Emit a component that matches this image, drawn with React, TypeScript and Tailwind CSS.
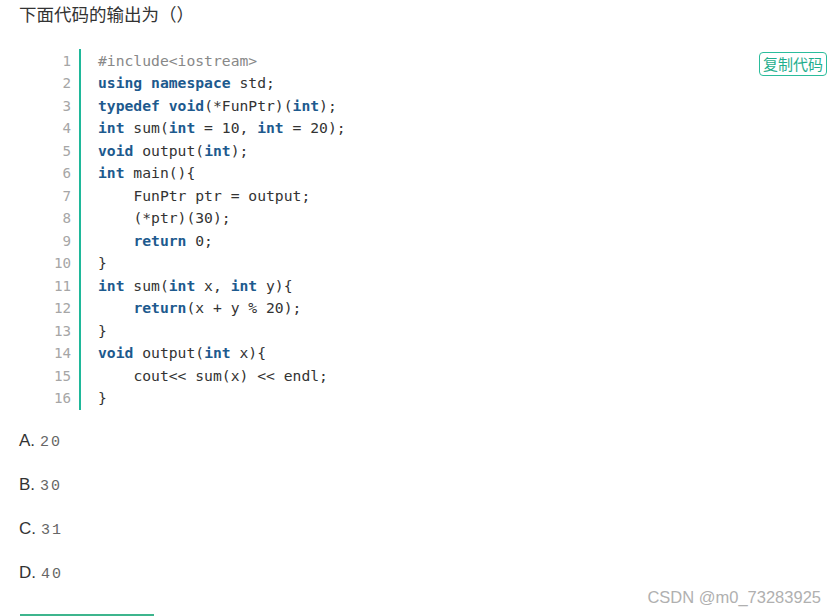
import React from "react";

const kw = "font-bold text-[#1d5a8e]";

const K = ({ children }: { children: React.ReactNode }) => (
  <span className={kw}>{children}</span>
);

const codeLines: React.ReactNode[] = [
  <span className="text-[#888]">#include&lt;iostream&gt;</span>,
  <>
    <K>using</K> <K>namespace</K> std;
  </>,
  <>
    <K>typedef</K> <K>void</K>(*FunPtr)(<K>int</K>);
  </>,
  <>
    <K>int</K> sum(<K>int</K> = 10, <K>int</K> = 20);
  </>,
  <>
    <K>void</K> output(<K>int</K>);
  </>,
  <>
    <K>int</K> main(){"{"}
  </>,
  <>{"    "}FunPtr ptr = output;</>,
  <>{"    "}(*ptr)(30);</>,
  <>
    {"    "}
    <K>return</K> 0;
  </>,
  <>{"}"}</>,
  <>
    <K>int</K> sum(<K>int</K> x, <K>int</K> y){"{"}
  </>,
  <>
    {"    "}
    <K>return</K>(x + y % 20);
  </>,
  <>{"}"}</>,
  <>
    <K>void</K> output(<K>int</K> x){"{"}
  </>,
  <>{"    "}cout&lt;&lt; sum(x) &lt;&lt; endl;</>,
  <>{"}"}</>,
];

const options = [
  { label: "A.", value: "20" },
  { label: "B.", value: "30" },
  { label: "C.", value: "31" },
  { label: "D.", value: "40" },
];

export default function App() {
  return (
    <div className="relative w-[835px] h-[616px] overflow-hidden bg-white font-['Liberation_Sans','Noto_Sans_CJK_SC',sans-serif] text-[#333]">
      <h1 className="pl-[19px] pt-[4px] text-[17.5px] leading-[22px] text-[#333]">
        下面代码的输出为（）
      </h1>

      {/* code block */}
      <div className="relative mt-[23px] flex">
        <div className="w-[71px] pt-[1px] text-right font-['DejaVu_Sans_Mono',monospace] text-[14.2px] leading-[22.47px] text-[#a6a6a6]">
          {codeLines.map((_, i) => (
            <div key={i}>{i + 1}</div>
          ))}
        </div>
        <div className="ml-[8px] border-l-2 border-[#1fb89a] pl-[17px] pt-[1px] font-['DejaVu_Sans_Mono',monospace] text-[14.7px] leading-[22.47px] text-[#333] whitespace-pre">
          {codeLines.map((l, i) => (
            <div key={i}>{l}</div>
          ))}
        </div>
        <button className="absolute right-[8px] top-[3px] rounded-[4px] border border-[#2bbd9c] px-[3px] text-[15px] leading-[22px] text-[#1fae8d] font-['Noto_Sans_CJK_SC',sans-serif]">
          复制代码
        </button>
      </div>

      {/* options */}
      <div className="mt-[20px] flex flex-col gap-[20px] pl-[19px]">
        {options.map((o) => (
          <div key={o.label} className="flex h-[24px] items-baseline text-[17px] leading-[22px]">
            <span className="text-[#333]">{o.label}</span>
            <span className="ml-[5px] font-['Liberation_Mono',monospace] text-[15px] leading-[22px] text-[#666] tracking-[2px]">
              {o.value}
            </span>
          </div>
        ))}
      </div>

      <div className="absolute bottom-0 left-[20px] h-[2px] w-[134px] bg-[#3db58d]" />

      <div className="absolute right-[14px] bottom-[6px] text-[16.5px] text-[#b0b0b0]">
        CSDN @m0_73283925
      </div>
    </div>
  );
}
